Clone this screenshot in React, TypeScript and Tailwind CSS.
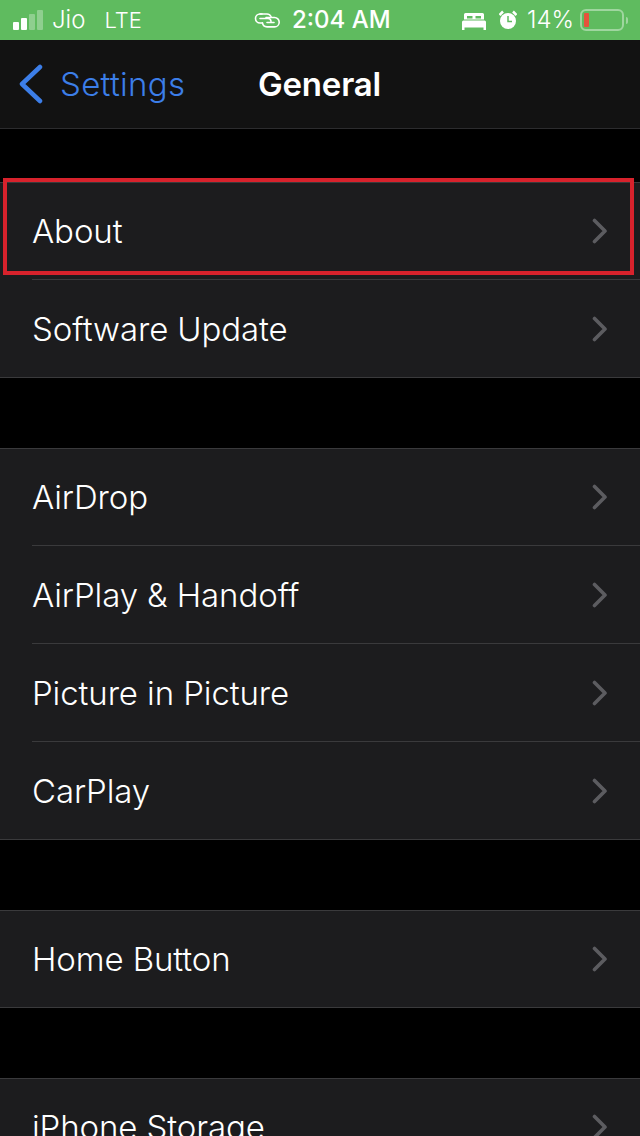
const Chevron = () => (
  <svg width="16" height="26" viewBox="0 0 16 26" fill="none" className="shrink-0">
    <path d="M2.5 2.5 L13 13 L2.5 23.5" stroke="#5c5c60" strokeWidth="3.6" strokeLinecap="round" strokeLinejoin="round" />
  </svg>
);

function Row({ label, first, last }: { label: string; first?: boolean; last?: boolean }) {
  // the last row's line runs the full width, the others are inset with the text
  let height = "h-[98px] border-b border-[#3a3a3c]";
  if (first && last) height = "h-[96px]";
  else if (first) height = "h-[97px] border-b border-[#3a3a3c]";
  else if (last) height = "h-[97px]";

  return (
    <div className={`pl-8 bg-[#1c1c1e] ${last ? "border-b border-[#3a3a3c]" : ""}`}>
      <div className={`flex items-center justify-between pr-[32px] ${height}`}>
        <span className="pt-[2px] text-[33px] text-white font-light tracking-[-0.1px]">{label}</span>
        <Chevron />
      </div>
    </div>
  );
}

function Group({ items }: { items: string[] }) {
  return (
    <div className="border-t border-[#3a3a3c]">
      {items.map((item, i) => (
        <Row key={item} label={item} first={i === 0} last={i === items.length - 1} />
      ))}
    </div>
  );
}

function StatusBar() {
  return (
    <div className="h-10 bg-[#5fbb5f] flex items-center text-white text-[24px] pl-[13px] pr-[12px]">
      <div className="flex items-center w-[240px]">
        <div className="flex items-end gap-[2px] h-[20px]">
          <div className="w-[6px] h-[8px] bg-white rounded-[1px]" />
          <div className="w-[6px] h-[12px] bg-white rounded-[1px]" />
          <div className="w-[6px] h-[16px] bg-white/30 rounded-[1px]" />
          <div className="w-[6px] h-[20px] bg-white/30 rounded-[1px]" />
        </div>
        <span className="ml-[9px] font-light">Jio</span>
        <span className="ml-[19px] font-light text-[22px]">LTE</span>
      </div>
      <div className="flex items-center">
        <svg width="28" height="16" viewBox="0 0 28 16" fill="none" stroke="white" strokeWidth="1.6" strokeLinecap="round">
          <path d="M9 2 H7 a4.5 4.5 0 0 0 0 9 h2" />
          <path d="M7 6.5 H15 a3 3 0 0 1 3 3" />
          <path d="M7 2 H14 a4.5 4.5 0 0 1 4 2.5" />
          <path d="M13 5.5 H21.5 a4.7 4.7 0 0 1 0 9.4 H14 a4.7 4.7 0 0 1 -4.5 -4" />
          <path d="M14 10.5 H21" />
        </svg>
        <span className="ml-[11px] font-medium">2:04 AM</span>
      </div>
      <div className="flex items-center ml-auto">
        <svg width="24" height="17" viewBox="0 0 24 17" fill="white" className="mt-[2px]">
          <path fillRule="evenodd" d="M3.5 0 H20.5 a1.5 1.5 0 0 1 1.5 1.5 V6.5 H2 V1.5 a1.5 1.5 0 0 1 1.5 -1.5 z M5 3 h5.5 v2.5 H5 z M13.5 3 H19 v2.5 h-5.5 z" />
          <path d="M1.5 7.5 h21 a1.5 1.5 0 0 1 1.5 1.5 V14.5 H0 V9 a1.5 1.5 0 0 1 1.5 -1.5 z M0 14.5 h2.5 V17 H0 z M21.5 14.5 H24 V17 h-2.5 z" />
        </svg>
        <svg width="18" height="20" viewBox="1 0 18 20" className="ml-[13px]">
          <circle cx="10" cy="11" r="8" fill="white" />
          <path d="M1.5 5 L5 1.5 M18.5 5 L15 1.5" stroke="white" strokeWidth="2.5" />
          <path d="M10 6 V11.5 H14" stroke="#5fbb5f" strokeWidth="1.5" fill="none" />
        </svg>
        <span className="ml-[10px] font-light">14%</span>
        <div className="ml-[6px] w-[44px] h-[22px] rounded-[6px] border-2 border-white/40 p-[2px] flex items-stretch">
          <div className="w-[5px] bg-[#e5533c] rounded-[1px]" />
        </div>
        <div className="ml-[2px] w-[2px] h-[7px] bg-white/40 rounded-r" />
      </div>
    </div>
  );
}

export default function App() {
  return (
    <main className="relative w-[640px] h-[1136px] overflow-hidden bg-black font-['Inter',sans-serif]">
      <StatusBar />
      <header className="h-[89px] bg-[#121212] border-b border-[#2c2c2e] flex items-center">
        <svg width="26" height="40" viewBox="0 0 26 40" fill="none" className="ml-[18px]">
          <path d="M22 3 L4 20 L22 37" stroke="#3c7ee8" strokeWidth="4.5" strokeLinecap="round" strokeLinejoin="round" />
        </svg>
        <span className="pt-[2px] ml-[16px] w-[198px] text-[33px] tracking-[0.3px] text-[#3c7ee8] font-light">Settings</span>
        <span className="pt-[2px] text-[33px] text-white font-semibold tracking-[-0.2px]">General</span>
      </header>

      <div className="pt-[53px] flex flex-col gap-[70px]">
        <Group items={["About", "Software Update"]} />
        <Group items={["AirDrop", "AirPlay & Handoff", "Picture in Picture", "CarPlay"]} />
        <Group items={["Home Button"]} />
        <Group items={["iPhone Storage"]} />
      </div>

      {/* red highlight box over the first row */}
      <div className="absolute left-[3px] top-[178px] w-[631px] h-[97px] border-4 border-[#d7222c]" />
    </main>
  );
}
